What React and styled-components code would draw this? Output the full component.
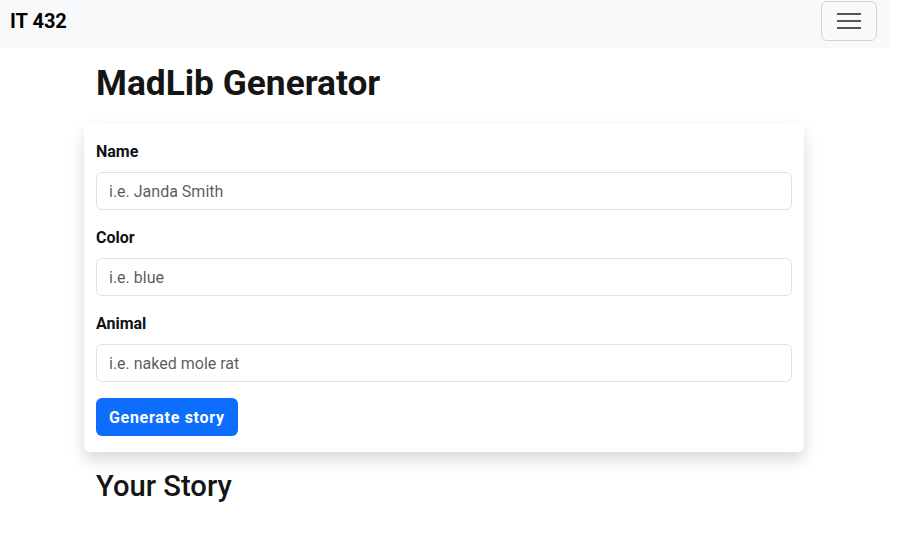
import React, { useState } from "react";
import styled, { createGlobalStyle } from "styled-components";

const GlobalStyle = createGlobalStyle`
  * { box-sizing: border-box; }
  body {
    margin: 0;
    background: #fff;
    color: #212529;
    font-family: Roboto, "Liberation Sans", sans-serif;
    font-size: 16px;
    line-height: 1.5;
  }
`;

function App() {
  const [details, setDetails] = useState({ name: "", color: "", animal: "" });
  const submitHandler = (e) => {
    e.preventDefault();
  };
  return (
    <Page>
      <GlobalStyle />
      <Navbar>
        <Brand href="#">IT 432</Brand>
        <Toggler type="button" aria-label="Toggle navigation">
          <svg width="24" height="20" viewBox="0 0 24 20">
            <path
              d="M0 3h24M0 10h24M0 17h24"
              stroke="#555"
              strokeWidth="2"
              fill="none"
            />
          </svg>
        </Toggler>
      </Navbar>
      <Container>
        <Title>MadLib Generator</Title>
        <Card onSubmit={submitHandler}>
          <FormGroup>
            <Label htmlFor="name">Name</Label>
            <Input
              id="name"
              placeholder="i.e. Janda Smith"
              value={details.name}
              onChange={(e) => setDetails({ ...details, name: e.target.value })}
            />
          </FormGroup>
          <FormGroup>
            <Label htmlFor="color">Color</Label>
            <Input
              id="color"
              placeholder="i.e. blue"
              value={details.color}
              onChange={(e) => setDetails({ ...details, color: e.target.value })}
            />
          </FormGroup>
          <FormGroup>
            <Label htmlFor="animal">Animal</Label>
            <Input
              id="animal"
              placeholder="i.e. naked mole rat"
              value={details.animal}
              onChange={(e) =>
                setDetails({ ...details, animal: e.target.value })
              }
            />
          </FormGroup>
          <Button type="submit">Generate story</Button>
        </Card>
        <Subtitle>Your Story</Subtitle>
      </Container>
    </Page>
  );
}

export default App;

const Page = styled.div`
  width: calc(100% - 16px);
`;

const Navbar = styled.nav`
  display: flex;
  align-items: center;
  justify-content: space-between;
  height: 48px;
  padding: 0 12px 6px 10px;
  background-color: #f8f9fa;
`;

const Brand = styled.a`
  font-size: 20px;
  font-weight: 700;
  color: #000;
  text-decoration: none;
  line-height: 30px;
`;

const Toggler = styled.button`
  display: flex;
  align-items: center;
  justify-content: center;
  width: 56px;
  height: 40px;
  padding: 0;
  background: transparent;
  border: 1px solid rgba(0, 0, 0, 0.15);
  border-radius: 6px;
`;

const Container = styled.div`
  width: 720px;
  margin-left: calc((100% - 721px) / 2);
`;

const Title = styled.h1`
  margin: 14px 0 20px;
  padding: 0 12px;
  font-size: 35.3px;
  font-weight: 700;
  line-height: 1.2;
  color: #151515;
`;

const Card = styled.form`
  display: flex;
  flex-direction: column;
  align-items: flex-start;
  padding: 16px 12px;
  background: #fff;
  border-radius: 6px;
  box-shadow: 0 8px 16px rgba(0, 0, 0, 0.15);
`;

const FormGroup = styled.div`
  display: flex;
  flex-direction: column;
  width: 100%;
  margin-bottom: 16px;
`;

const Label = styled.label`
  font-weight: 700;
  line-height: 24px;
  margin-bottom: 8px;
  color: #111;
`;

const Input = styled.input`
  width: 100%;
  height: 38px;
  padding: 6px 12px;
  font-family: inherit;
  font-size: 16px;
  color: #212529;
  border: 1px solid #dee2e6;
  border-radius: 6px;
  outline: none;

  &::placeholder {
    color: rgba(33, 37, 41, 0.75);
  }
`;

const Button = styled.button`
  height: 38px;
  padding: 6px 13px;
  font-family: inherit;
  font-size: 16px;
  font-weight: 700;
  letter-spacing: 0.7px;
  color: #fff;
  background-color: #0d6efd;
  border: none;
  border-radius: 6px;
`;

const Subtitle = styled.h2`
  margin: 17px 0 0;
  padding: 0 12px;
  font-size: 29.2px;
  font-weight: 500;
  line-height: 1.2;
  color: #151515;
`;
